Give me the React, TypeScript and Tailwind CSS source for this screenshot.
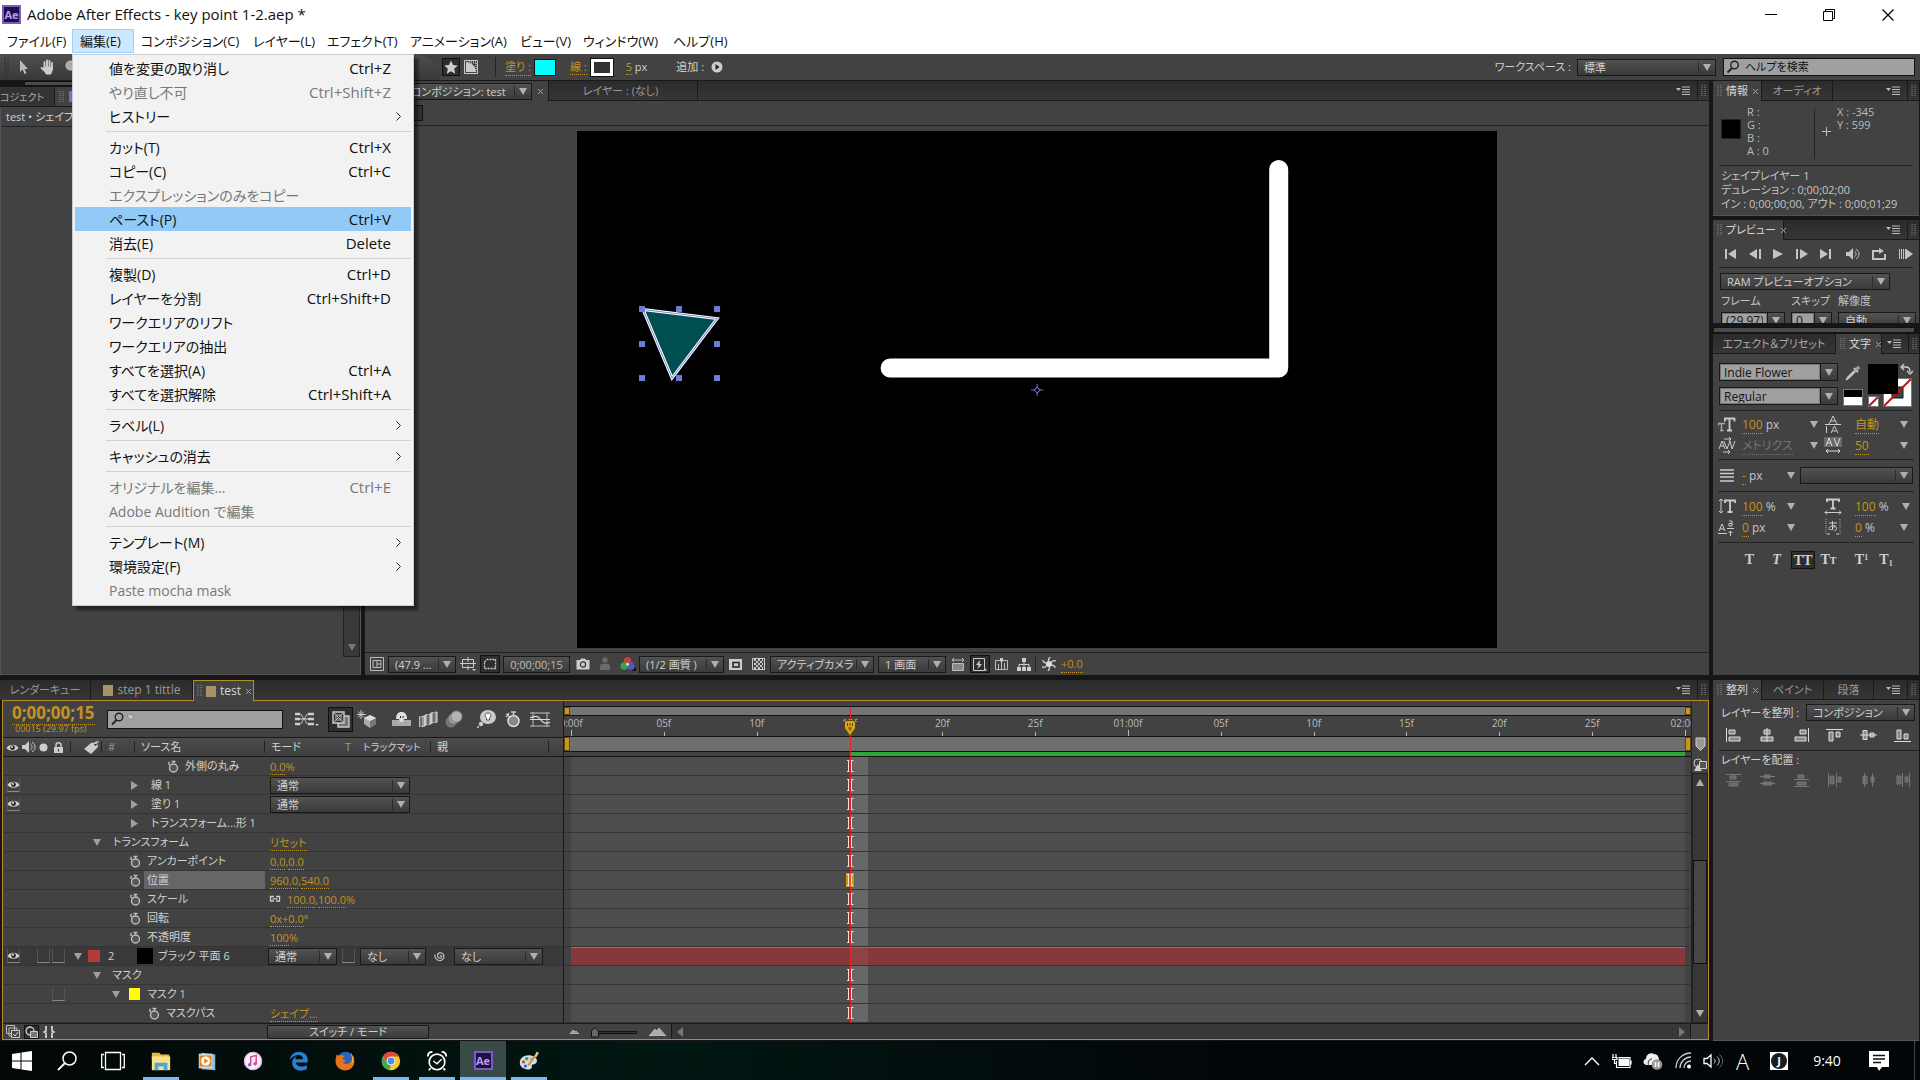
import React from "react";
import { clsx } from "clsx";

type Entry = { label: string; keys?: string; sub?: boolean; off?: boolean; active?: boolean };

const editMenu: Entry[][] = [
  [
    { label: "値を変更の取り消し", keys: "Ctrl+Z" },
    { label: "やり直し不可", keys: "Ctrl+Shift+Z", off: true },
    { label: "ヒストリー", sub: true },
  ],
  [
    { label: "カット(T)", keys: "Ctrl+X" },
    { label: "コピー(C)", keys: "Ctrl+C" },
    { label: "エクスプレッションのみをコピー", off: true },
    { label: "ペースト(P)", keys: "Ctrl+V", active: true },
    { label: "消去(E)", keys: "Delete" },
  ],
  [
    { label: "複製(D)", keys: "Ctrl+D" },
    { label: "レイヤーを分割", keys: "Ctrl+Shift+D" },
    { label: "ワークエリアのリフト" },
    { label: "ワークエリアの抽出" },
    { label: "すべてを選択(A)", keys: "Ctrl+A" },
    { label: "すべてを選択解除", keys: "Ctrl+Shift+A" },
  ],
  [{ label: "ラベル(L)", sub: true }],
  [{ label: "キャッシュの消去", sub: true }],
  [
    { label: "オリジナルを編集...", keys: "Ctrl+E", off: true },
    { label: "Adobe Audition で編集", off: true },
  ],
  [
    { label: "テンプレート(M)", sub: true },
    { label: "環境設定(F)", sub: true },
    { label: "Paste mocha mask", off: true },
  ],
];

const menus = [
  { label: "ファイル(F)", w: "w-[72px]" },
  { label: "編集(E)", w: "w-[62px]", open: true },
  { label: "コンポジション(C)", w: "w-[112px]" },
  { label: "レイヤー(L)", w: "w-[74px]" },
  { label: "エフェクト(T)", w: "w-[83px]" },
  { label: "アニメーション(A)", w: "w-[110px]" },
  { label: "ビュー(V)", w: "w-[63px]" },
  { label: "ウィンドウ(W)", w: "w-[90px]" },
  { label: "ヘルプ(H)", w: "w-[70px]" },
];

/* ---------- small shared pieces ---------- */

const Svg = ({ w = 16, h = 16, className, children }: { w?: number; h?: number; className?: string; children: React.ReactNode }) => (
  <svg width={w} height={h} viewBox={`0 0 ${w} ${h}`} fill="none" aria-hidden="true" className={clsx("shrink-0", className)}>
    {children}
  </svg>
);

const Down = ({ className = "text-[#b0b0b0]" }: { className?: string }) => (
  <Svg w={8} h={7} className={className}>
    <path d="M0 0h8L4 7z" fill="currentColor" />
  </Svg>
);

const Right = () => (
  <Svg w={7} h={9}>
    <path d="M0 0v9l7-4.500z" fill="#a0a0a0" />
  </Svg>
);

const Cell = ({ className, children }: { className?: string; children?: React.ReactNode }) => (
  <span className={clsx("flex shrink-0 items-center justify-center", className)}>{children}</span>
);

const Grip = () => (
  <Svg w={5} h={12}>
    <path d="M1 0v12M4 0v12" stroke="#8a8a8a" strokeDasharray="1 1" />
  </Svg>
);

const Close = () => (
  <Svg w={7} h={7}>
    <path d="M1 1l5 5M6 1L1 6" stroke="#a0a0a0" />
  </Svg>
);

const PanelEnd = () => (
  <div className="ml-auto flex shrink-0 self-stretch">
    <button aria-label="パネルメニュー" className="flex w-[26px] items-center justify-center pr-[2px]">
      <Svg w={14} h={10}>
        <path d="M0 2h5L2.500 5z" fill="#bbb" />
        <path d="M6 1h8M6 3.500h8M6 6h8M6 8.500h8" stroke="#bbb" />
      </Svg>
    </button>
    <Cell className="w-[12px] border-l border-[#181818]">
      <Grip />
    </Cell>
  </div>
);

const strip =
  "flex h-[20px] shrink-0 items-stretch border-b border-[#1a1a1a] bg-linear-to-b from-[#2b2b2b] to-[#363636] whitespace-nowrap";
const activeTab =
  "-mb-px flex shrink-0 items-center gap-[4px] border-r border-[#1a1a1a] bg-[#424242] pl-1 text-[#d8d8d8]";
const idleTab = "flex shrink-0 items-center justify-center border-r border-[#1a1a1a] text-[#999]";

const Pick = ({ value, name, className }: { value: string; name: string; className?: string }) => (
  <span
    className={clsx(
      "relative flex h-[17px] shrink-0 items-center border border-[#191919] bg-linear-to-b from-[#525252] to-[#3a3a3a]",
      className
    )}>
    <select
      aria-label={name}
      className="h-full w-full appearance-none bg-transparent pr-[18px] pl-[6px] text-[11px] leading-[15px] text-[#d0d0d0] outline-none">
      <option>{value}</option>
    </select>
    <span className="pointer-events-none absolute top-[2px] right-0 bottom-[2px] flex w-[17px] items-center justify-center border-l border-[#2a2a2a]">
      <Down />
    </span>
  </span>
);

const Combo = ({ value, name, className, tall }: { value: string; name: string; className?: string; tall?: boolean }) => (
  <span className={clsx("flex shrink-0 border border-[#191919]", tall ? "h-[18px]" : "h-[17px]", className)}>
    <input
      aria-label={name}
      defaultValue={value}
      className="w-0 min-w-0 flex-1 border border-[#777] bg-[#a0a0a0] px-[3px] text-[12px] leading-[15px] text-[#141414] outline-none"
    />
    <span className="flex w-[17px] items-center justify-center border-l border-[#191919] bg-linear-to-b from-[#525252] to-[#3a3a3a]">
      <Down />
    </span>
  </span>
);

const Num = ({ children, dim }: { children: React.ReactNode; dim?: boolean }) => (
  <a
    href="#"
    className={clsx(
      "border-b border-dotted",
      dim ? "border-[#6d6d6d] text-[#737373]" : "border-[#c4921f] text-[#c4921f]"
    )}>
    {children}
  </a>
);

const Stopwatch = () => (
  <Svg w={12} h={13}>
    <circle cx="6.500" cy="8" r="4" stroke="#bdbdbd" strokeWidth="1.400" fill="#555" />
    <path d="M4.500 1.500h4M6.500 1.500v2M1 3.500l2 1.500M1.500 2l1.500 1" stroke="#bdbdbd" strokeWidth="1.300" />
  </Svg>
);

const Eye = () => (
  <Svg w={13} h={9}>
    <path d="M.5 5C3 .8 10 .8 12.500 5 10 8.600 3 8.600.5 5z" fill="#d0d0d0" />
    <circle cx="6.500" cy="4.600" r="2.400" fill="#222" />
    <circle cx="6" cy="4" r=".9" fill="#fff" />
  </Svg>
);

const Switch = ({ children }: { children?: React.ReactNode }) => (
  <span className="flex h-[14px] w-[13px] shrink-0 items-center justify-center border-x border-b border-x-[#565656] border-b-[#8a8a8a]">
    {children}
  </span>
);

const AeLogo = () => (
  <span className="flex h-[19px] w-[19px] items-center justify-center border-2 border-[#7b5bc4] bg-[#1f0f45] text-[11px] leading-none font-bold text-[#b79cf0]">
    Ae
  </span>
);

/* ---------- window header ---------- */

const EditMenu = () => (
  <div
    role="menu"
    className="absolute top-full left-0 z-50 w-[342px] border border-[#ccc] bg-[#f2f2f2] px-[2px] pt-px pb-[3px] shadow-[4px_4px_3px_rgba(0,0,0,0.5)]">
    {editMenu.map((group, g) => (
      <div key={g}>
        {g > 0 && <div className="my-[3px] ml-[31px] h-px bg-[#d2d2d2]" />}
        {group.map((item) => (
          <button
            key={item.label}
            role="menuitem"
            disabled={item.off}
            className={clsx(
              "flex h-[24px] w-full items-center justify-between pr-[9px] pl-[34px] text-[14px] leading-[23px] whitespace-nowrap",
              item.active && "bg-[#91c9f7]",
              item.off ? "text-[#787878]" : "text-[#111]"
            )}>
            <span>{item.label}</span>
            {item.keys && <span className="pr-[11px] text-[15px]">{item.keys}</span>}
            {item.sub && (
              <Svg w={7} h={9}>
                <path d="M1.500.5l4 4-4 4" stroke="#222" />
              </Svg>
            )}
          </button>
        ))}
      </div>
    ))}
  </div>
);

const Header = () => (
  <header className="bg-white text-[#111]">
    <div className="flex h-[29px] items-center pl-[2px]">
      <AeLogo />
      <h1 className="pb-[2px] pl-[6px] text-[15px] leading-[20px]">Adobe After Effects - key point 1-2.aep *</h1>
      <div className="mr-[2px] ml-auto flex self-stretch">
        <button aria-label="最小化" className="flex w-[58px] items-center justify-center">
          <Svg w={12} h={12}>
            <path d="M0 5.500h12" stroke="#000" />
          </Svg>
        </button>
        <button aria-label="元に戻す" className="flex w-[58px] items-center justify-center">
          <Svg w={12} h={12}>
            <path d="M.5 2.500h9v9h-9zM2.500 2.500v-2h9v9h-2" stroke="#000" />
          </Svg>
        </button>
        <button aria-label="閉じる" className="flex w-[60px] items-center justify-center">
          <Svg w={12} h={12}>
            <path d="M.5.5l11 11M11.500.5l-11 11" stroke="#000" strokeWidth="1.200" />
          </Svg>
        </button>
      </div>
    </div>
    <nav className="flex h-[25px] text-[13px] leading-[22px] whitespace-nowrap">
      {menus.map((m) => (
        <div key={m.label} className={clsx("relative shrink-0", m.w)}>
          <button
            className={clsx(
              "h-[24px] w-full pl-[7px] text-left",
              m.open && "border border-[#99d1ff] bg-[#cce8ff]"
            )}>
            {m.label}
          </button>
          {m.open && <EditMenu />}
        </div>
      ))}
    </nav>
  </header>
);

const Toolbar = () => (
  <div className="flex h-[27px] items-center border-b border-[#191919] bg-[#424242] text-[11px] leading-[16px] whitespace-nowrap text-[#d0d0d0]">
    <div className="flex w-[440px] shrink-0 items-center self-stretch rounded-tr-[32px] bg-linear-to-b from-[#505050] to-[#383838]">
      <Cell className="w-[12px]">
        <Svg w={5} h={20}>
          <path d="M1 0v20M4 0v20" stroke="#222" strokeDasharray="1 1" />
        </Svg>
      </Cell>
      <Cell className="w-[24px]">
        <Svg w={10} h={14}>
          <path d="M1 0v12l2.500-2.500L5.500 14l2-1-2-4H9z" fill="#bbb" />
        </Svg>
      </Cell>
      <Cell className="w-[24px]">
        <Svg w={16} h={16}>
          <path
            d="M4.500 8.500V3.200M7 7.500V1.500M9.500 7.500V2M12 8.500V4"
            stroke="#ccc"
            strokeWidth="1.900"
            strokeLinecap="round"
          />
          <path d="M3.500 7.500h9.500v3l-2 5H6L4.500 13 .8 9.500c-.8-1 .6-2 1.500-1.200l1.200 1z" fill="#ccc" />
        </Svg>
      </Cell>
      <Cell className="w-[24px]">
        <Svg w={14} h={14}>
          <circle cx="5.500" cy="5.500" r="4.500" fill="#aaa" stroke="#ccc" />
          <path d="M9 9l4 4" stroke="#ccc" strokeWidth="2" />
        </Svg>
      </Cell>
    </div>
    <button aria-label="シェイプを作成" className="ml-[2px] flex h-[18px] w-[18px] shrink-0 items-center justify-center border border-[#111] bg-[#2e2e2e]">
      <Svg w={14} h={14}>
        <path d="M7 .5l2 4.600 4.800.5-3.600 3.200 1 4.900L7 11.200l-4.200 2.500 1-4.900L.2 5.600 5 5.100z" fill="#ccc" />
      </Svg>
    </button>
    <button aria-label="マスクを作成" className="ml-[4px]">
      <Svg w={14} h={14}>
        <path d="M.5.5h13v13H.5z" stroke="#ccc" />
        <path d="M2 2v10h10C12 7 8 2.500 2 2z" fill="#ccc" />
        <path d="M5 2.500h7.500v8" stroke="#aaa" strokeWidth="2.500" strokeDasharray="1 1" />
      </Svg>
    </button>
    <span className="mr-[9px] ml-[17px] h-[20px] border-l border-[#222]" />
    <Num>塗り :</Num>
    <button aria-label="塗りのカラー" className="ml-[3px] h-[17px] w-[22px] shrink-0 border border-[#111] bg-[#00ffff]" />
    <span className="ml-[14px] shrink-0">
      <Num>線 :</Num>
    </span>
    <button aria-label="線のカラー" className="ml-[4px] h-[17px] w-[22px] shrink-0 border-3 border-white bg-[#333] outline outline-[#111]" />
    <span className="ml-[13px] shrink-0">
      <Num>5</Num> px
    </span>
    <span className="ml-[29px] shrink-0">追加 :</span>
    <button aria-label="追加" className="ml-[7px]">
      <Svg w={12} h={12}>
        <circle cx="6" cy="6" r="5.500" fill="#ccc" />
        <path d="M4.500 3v6l4-3z" fill="#222" />
      </Svg>
    </button>
    <span className="mr-[6px] ml-auto shrink-0">ワークスペース :</span>
    <Pick name="ワークスペース" value="標準" className="w-[139px]" />
    <label className="mr-[5px] ml-[7px] flex h-[18px] w-[192px] shrink-0 items-center border border-[#111] bg-[#a0a0a0]">
      <Svg w={14} h={14} className="ml-[2px]">
        <circle cx="8.500" cy="5" r="3.800" stroke="#222" strokeWidth="1.400" />
        <path d="M6 8l-4.500 4.500" stroke="#222" strokeWidth="1.800" />
      </Svg>
      <input
        aria-label="ヘルプを検索"
        defaultValue="ヘルプを検索"
        className="w-0 min-w-0 flex-1 bg-transparent pl-[5px] text-[11px] leading-[16px] text-[#111] outline-none"
      />
    </label>
  </div>
);

/* ---------- upper panels ---------- */

const ProjectPanel = () => (
  <section className="flex w-[361px] shrink-0 flex-col text-[11px] leading-[16px] whitespace-nowrap text-[#d0d0d0]">
    <div className="ml-[24px] h-[5px] border border-[#111] bg-[#4a4a4a]" />
    <div className="mt-px flex h-[20px] shrink-0 items-stretch border-b border-[#1a1a1a] bg-[#333]">
      <button className="w-[55px] shrink-0 border-r border-[#1a1a1a] text-left text-[10px] text-[#aaa]">コジェクト</button>
      <button aria-label="エフェクトコントロール" className="flex w-[120px] items-center gap-[5px] bg-[#424242] pl-[4px]">
        <Grip />
        <span className="h-[11px] w-[11px] bg-[#6b74c9]" />
      </button>
    </div>
    <div className="flex flex-1 flex-col border-x border-b border-[#555] bg-[#424242]">
      <p className="h-[20px] border-b border-[#222] pt-px pl-[5px] leading-[18px]">test • シェイプ</p>
      <div className="flex flex-1 justify-end pb-[17px]">
        <div className="flex w-[17px] items-end justify-center border border-[#222] bg-[#393939] pb-[5px]">
          <Down className="text-[#777]" />
        </div>
      </div>
    </div>
  </section>
);

const handles = [
  [643, 309],
  [680, 309],
  [718, 309],
  [643, 344],
  [718, 344],
  [643, 378],
  [680, 378],
  [718, 378],
];

const Artwork = () => (
  <svg viewBox="578 131 919 517" className="block w-[68.4%] bg-black" role="img" aria-label="test">
    <path d="M644 309.500L718 318.500 673 378z" fill="#004f50" stroke="#fff" strokeWidth="3" />
    <path d="M644 309.500L718 318.500 673 378z" stroke="#7d88dc" fill="none" />
    {handles.map(([x, y]) => (
      <rect key={`${x}-${y}`} x={x - 3} y={y - 3} width="6" height="6" fill="#6f7bd6" />
    ))}
    <path d="M891 368H1279.500V169.500" stroke="#fff" strokeWidth="19" fill="none" strokeLinecap="round" strokeLinejoin="round" />
    <path d="M1038 384v4M1038 392v4M1032 390h4M1040 390h4M1038 387l3 3-3 3-3-3z" stroke="#6f74c8" fill="none" />
  </svg>
);

const ViewerFooter = () => (
  <div className="flex h-[23px] items-center border-t border-[#222] text-[11px] leading-[16px] text-[#bbb]">
    <Cell className="w-[23px]">
      <Svg w={14} h={14}>
        <path d="M.5.5h13v13H.5z" stroke="#bbb" />
        <path d="M3 3.500h8v7H3zM7 3.500v7M7 7h4" stroke="#bbb" />
      </Svg>
    </Cell>
    <Pick name="拡大率" value="(47.9 ..." className="w-[68px]" />
    <Cell className="w-[24px]">
      <Svg w={16} h={14}>
        <path d="M2.500 2.500h11v8h-11zM0 6.500h6M10 6.500h6M8 0v5M8 8.500V13M6 6.500h4" stroke="#ccc" />
        <path d="M12 12h4l-2 2z" fill="#ccc" />
      </Svg>
    </Cell>
    <Cell className="h-[18px] w-[20px] border border-[#111] bg-[#2e2e2e]">
      <Svg w={14} h={12}>
        <path d="M1.500 4l2.500-2.500h8.500v9h-11z" stroke="#ccc" strokeWidth="1.300" strokeDasharray="2 1" />
      </Svg>
    </Cell>
    <button className="mx-[3px] h-[17px] w-[67px] shrink-0 border border-[#191919] bg-linear-to-b from-[#525252] to-[#3a3a3a] leading-[15px]">
      0;00;00;15
    </button>
    <Cell className="w-[20px]">
      <Svg w={14} h={12}>
        <path d="M1 2h3l1-1.500h4L10 2h3.500v9.500H.5V2z" fill="#ccc" />
        <circle cx="7" cy="6.500" r="2.600" fill="#ccc" stroke="#333" strokeWidth="1.200" />
      </Svg>
    </Cell>
    <Cell className="w-[24px]">
      <Svg w={10} h={14}>
        <circle cx="5" cy="3" r="2.800" fill="#6a6a6a" />
        <path d="M0 13V8.500C0 6 10 6 10 8.500V13z" fill="#6a6a6a" />
      </Svg>
    </Cell>
    <Cell className="w-[22px]">
      <Svg w={16} h={14}>
        <circle cx="7.500" cy="4" r="3.800" fill="#c74538" />
        <circle cx="4.200" cy="9" r="3.800" fill="#3ba046" />
        <circle cx="10.500" cy="9" r="3.800" fill="#5757c4" />
        <circle cx="7.500" cy="7.300" r="1.500" fill="#ddd" />
        <path d="M12 14h4v-4z" fill="#111" />
      </Svg>
    </Cell>
    <Pick name="解像度" value="(1/2 画質 )" className="w-[85px]" />
    <Cell className="w-[23px]">
      <Svg w={13} h={11}>
        <path d="M0 0h13v11H0z" fill="#ccc" />
        <path d="M4 3.500h6v4.500H4z" fill="#ccc" stroke="#222" strokeWidth="1.500" />
      </Svg>
    </Cell>
    <Cell className="w-[23px]">
      <Svg w={13} h={12}>
        <path d="M.5.5h12v11H.5z" stroke="#ccc" />
        <path d="M2 2h9M2 6h9M2 10h9" stroke="#ccc" strokeWidth="2" strokeDasharray="2 2" />
        <path d="M4 4h8M4 8h8" stroke="#ccc" strokeWidth="2" strokeDasharray="2 2" />
      </Svg>
    </Cell>
    <Pick name="3D ビュー" value="アクティブカメラ" className="mr-[4px] w-[104px]" />
    <Pick name="ビューレイアウト" value="1 画面" className="w-[68px]" />
    <Cell className="w-[24px]">
      <Svg w={12} h={13}>
        <path d="M0 2h12M2 0L0 2l2 2M10 0l2 2-2 2" stroke="#bbb" />
        <path d="M.5 5.500h11v7H.5z" fill="#888" stroke="#bbb" />
      </Svg>
    </Cell>
    <Cell className="h-[18px] w-[20px] border border-[#111] bg-[#2e2e2e]">
      <Svg w={14} h={13}>
        <path d="M.5.5h11v12H.5z" stroke="#ccc" />
        <path d="M7 2L3 7h2.500L4.500 11 9 6H6.500z" fill="#ccc" />
        <path d="M11 11h3l-1.500 2z" fill="#ccc" />
      </Svg>
    </Cell>
    <Cell className="w-[22px]">
      <Svg w={13} h={12}>
        <path d="M.5 2.500h12v9H.5zM3.500 11V6M6.500 11V4M9.500 11V5" stroke="#bbb" />
        <path d="M5 0h3v3L6.500 4.500 5 3z" fill="#ccc" />
      </Svg>
    </Cell>
    <Cell className="w-[23px]">
      <Svg w={14} h={13}>
        <path d="M5 0h4v4H5zM0 9h4v4H0zM5 9h4v4H5zM10 9h4v4h-4z" fill="#ccc" />
        <path d="M7 4v5M2 9V6.500h10V9" stroke="#ccc" />
      </Svg>
    </Cell>
    <Cell className="w-[26px] border-l border-[#222]">
      <Svg w={14} h={14}>
        <circle cx="7" cy="7" r="3" fill="#ddd" />
        <path d="M7 5c-1-2 0-4 1-5M9 6c1-2 3-3 5-2M9 8c2 0 4 1 4 3M7 9c1 2 0 4-1 5M5 8c-1 2-3 3-5 2M5 6C3 6 1 5 1 3" stroke="#ccc" strokeWidth="1.400" />
      </Svg>
    </Cell>
    <Num>+0.0</Num>
  </div>
);

const CompPanel = () => (
  <section className="flex min-w-0 flex-1 flex-col bg-[#424242] text-[11px] leading-[16px]">
    <div className={strip}>
      <div className="-mb-px flex items-center border-r border-[#1a1a1a] bg-[#424242] pr-[4px]">
        <Pick name="コンポジション" value="コンポジション: test" className="mr-[5px] ml-[39px] w-[128px]" />
        <Close />
      </div>
      <button className={clsx(idleTab, "w-[149px] pr-[5px]")}>レイヤー : (なし)</button>
      <PanelEnd />
    </div>
    <div className="h-[25px] border-b border-[#222] py-[4px]">
      <div className="h-[16px] w-[58px] border border-[#111] bg-[#333]" />
    </div>
    <div className="flex flex-1 items-center justify-center pt-[5px] pb-[4px]">
      <Artwork />
    </div>
    <ViewerFooter />
  </section>
);

const InfoPanel = () => (
  <section className="border-b border-[#555] bg-[#424242] pb-[4px]">
    <div className={strip}>
      <button className={clsx(activeTab, "w-[49px]")}>
        <Grip />
        情報
        <Close />
      </button>
      <button className={clsx(idleTab, "w-[71px]")}>オーディオ</button>
      <PanelEnd />
    </div>
    <div className="mx-[6px] flex h-[65px] border-b border-[#222] pt-[4px] leading-[13px] text-[#bbb]">
      <span className="mt-[14px] ml-[2px] h-[20px] w-[20px] border border-[#222] bg-black" />
      <div className="ml-[6px] w-[67px]">
        <p>R :</p>
        <p>G :</p>
        <p>B :</p>
        <p>A : 0</p>
      </div>
      <div className="mt-[4px] mr-[7px] h-[50px] border-l border-[#222]" />
      <Svg w={9} h={9} className="mt-[22px]">
        <path d="M4.500 0v9M0 4.500h9" stroke="#bbb" />
      </Svg>
      <div className="ml-[6px]">
        <p>X : -345</p>
        <p>Y : 599</p>
      </div>
    </div>
    <div className="pt-[3px] pl-[8px] text-[11px] leading-[14px] whitespace-nowrap text-[#c4c4c4]">
      <p>シェイプレイヤー 1</p>
      <p>デュレーション : 0;00;02;00</p>
      <p>イン : 0;00;00;00, アウト : 0;00;01;29</p>
    </div>
  </section>
);

const PreviewPanel = () => (
  <section className="mt-[4px] h-[103px] overflow-hidden bg-[#424242]">
    <div className={strip}>
      <button className={clsx(activeTab, "w-[71px]")}>
        <Grip />
        プレビュー
        <Close />
      </button>
      <PanelEnd />
    </div>
    <div className="mx-[6px] flex h-[28px] items-center justify-between border-b border-[#222] pl-[6px] text-[#c4c4c4]">
      <button aria-label="最初のフレーム">
        <Svg w={11} h={10}>
          <path d="M1 0v10" stroke="currentColor" strokeWidth="2" />
          <path d="M11 0v10L3 5z" fill="currentColor" />
        </Svg>
      </button>
      <button aria-label="前のフレーム">
        <Svg w={12} h={10}>
          <path d="M8 0v10L0 5z" fill="currentColor" />
          <path d="M11 0v10" stroke="currentColor" strokeWidth="2" />
        </Svg>
      </button>
      <button aria-label="再生">
        <Svg w={10} h={10}>
          <path d="M0 0v10l10-5z" fill="currentColor" />
        </Svg>
      </button>
      <button aria-label="次のフレーム">
        <Svg w={12} h={10}>
          <path d="M1 0v10" stroke="currentColor" strokeWidth="2" />
          <path d="M4 0v10l8-5z" fill="currentColor" />
        </Svg>
      </button>
      <button aria-label="最後のフレーム">
        <Svg w={11} h={10}>
          <path d="M0 0v10l8-5z" fill="currentColor" />
          <path d="M10 0v10" stroke="currentColor" strokeWidth="2" />
        </Svg>
      </button>
      <button aria-label="オーディオ" className="ml-[2px]">
        <Svg w={14} h={12}>
          <path d="M0 4h3l4-4v12L3 8H0z" fill="currentColor" />
          <path d="M8.500 3c2 1.500 2 4.500 0 6M10 1c4 2.500 4 7.500 0 10" stroke="currentColor" />
        </Svg>
      </button>
      <button aria-label="ループ">
        <Svg w={14} h={12}>
          <path d="M8 3H1v8h12V6" stroke="currentColor" strokeWidth="2" />
          <path d="M7 0v6l5-3z" fill="currentColor" />
        </Svg>
      </button>
      <button aria-label="RAM プレビュー">
        <Svg w={14} h={10}>
          <path d="M.5 0v10M2.500 0v10M4.500 0v10M6.500 0v10" stroke="currentColor" />
          <path d="M7 0v10l7-5z" fill="currentColor" />
        </Svg>
      </button>
    </div>
    <Pick name="プレビューオプション" value="RAM プレビューオプション" className="mt-[5px] ml-[7px] w-[170px]" />
    <div className="mt-[3px] flex gap-[6px] pl-[8px] whitespace-nowrap text-[#c4c4c4]">
      <div className="w-[64px]">
        フレーム
        <Combo name="フレームレート" value="(29.97)" className="mt-[3px]" />
      </div>
      <div className="w-[41px]">
        スキップ
        <Combo name="スキップ" value="0" className="mt-[3px]" />
      </div>
      <div className="w-[78px]">
        解像度
        <Pick name="プレビュー解像度" value="自動" className="mt-[3px]" />
      </div>
    </div>
  </section>
);

const TypeIcon = ({ kind }: { kind: string }) => (
  <Svg w={18} h={17}>
    {kind === "size" && (
      <>
        <path d="M6 2.500h11M7 2v3.500M16.500 2v3.500M11.500 2v12M9 14.500h5" stroke="#ccc" strokeWidth="1.800" />
        <path d="M0 7.500h7M.5 7v2.500M3.500 7v7M2 14.500h3.500" stroke="#aaa" strokeWidth="1.400" />
      </>
    )}
    {kind === "leading" && (
      <path d="M5 8L9 0l4 8M6.500 5h5M1 8.500h16M2.500 10v7M7 17l3.500-7 3.500 7M8.500 15h4" stroke="#ccc" />
    )}
    {kind === "kern" && (
      <path d="M1 12l3-8 3 8M2 9h4M6 4l3 8 3-8M12 4l2 8 3-8M6 2h7M11 0l2 2-2 2M5 15h7M10 13l2 2-2 2" stroke="#ccc" />
    )}
    {kind === "track" && (
      <>
        <path d="M0 0h18v10H0z" fill="#6a6a6a" />
        <path d="M2 9l3-8 3 8M3 6h4M10 1l3 8 3-8M2 14h14M4 12l-2 2 2 2M14 12l2 2-2 2" stroke="#ddd" />
      </>
    )}
    {kind === "vscale" && (
      <>
        <path d="M3 1v14M1 3l2-2 2 2M1 13l2 2 2-2" stroke="#ccc" />
        <path d="M7 5V2.500h10V5M12 2v12M9.500 14h5" stroke="#ccc" strokeWidth="1.800" />
      </>
    )}
    {kind === "hscale" && (
      <>
        <path d="M3 4V1.500h12V4M9 1v9M6.500 10.500h5" stroke="#ccc" strokeWidth="1.800" />
        <path d="M1 14.500h16M3 12.500l-2 2 2 2M15 12.500l2 2-2 2" stroke="#ccc" />
      </>
    )}
    {kind === "baseline" && (
      <path d="M1 12l3-7 3 7M2 10h4M0 14.500h9M11 2h3v5h-3V4.500h3M9 9.500h7M12.500 17v-5M10.500 14l2-2 2 2" stroke="#ccc" />
    )}
    {kind === "tsume" && (
      <>
        <path d="M2 0v16M16 0v16" stroke="#aaa" strokeDasharray="1 1" />
        <path d="M5 4h8M8.500 2v9M11 6c-1 4-5 6-6 4s5-5 7-2-2 4-2 4M3 15h3M12 15h3" stroke="#ccc" />
      </>
    )}
  </Svg>
);

type FieldProps = { icon: string; value: string; unit?: string; dim?: boolean; className: string };

const Field = ({ icon, value, unit, dim, className }: FieldProps) => (
  <div className={clsx("flex h-[21px] items-center text-[12px]", className)}>
    <TypeIcon kind={icon} />
    <span className="flex-1 leading-[14px] whitespace-nowrap text-[#c4c4c4]">
      <Num dim={dim}>{value}</Num> {unit}
    </span>
    <Down />
  </div>
);

const CharacterPanel = () => (
  <section className="mt-px flex-1 bg-[#424242]">
    <div className={strip}>
      <button className={clsx(idleTab, "w-[123px] text-[#aaa]")}>エフェクト＆プリセット</button>
      <button className={clsx(activeTab, "w-[46px]")}>
        <Grip />
        文字
        <Close />
      </button>
      <PanelEnd />
    </div>
    <div className="mx-[6px] flex h-[57px] border-b border-[#222] pt-[9px]">
      <div className="flex w-[121px] flex-col gap-[6px]">
        <Combo tall name="フォント" value="Indie Flower" />
        <Combo tall name="フォントスタイル" value="Regular" />
      </div>
      <div className="flex w-[30px] flex-col items-center gap-[8px] pt-[2px]">
        <Svg w={16} h={16}>
          <path d="M9 3l4 4" stroke="#ccc" strokeWidth="2" />
          <path d="M10 4l3-3.500L15.500 3 12 6z" fill="#999" />
          <path d="M9.500 5.500L3 12l-2 3 3-2 6.500-6.500" stroke="#ccc" strokeWidth="1.300" />
        </Svg>
        <span className="h-[17px] w-[20px] border border-[#777] bg-linear-to-b from-black from-45% to-white to-45%" />
      </div>
      <Svg w={45} h={45}>
        <path d="M15.500 15.500h28v28h-28z" fill="#fff" stroke="#777" />
        <path d="M24 24h11v11H24z" fill="#424242" stroke="#111" />
        <path d="M16 43L43 16" stroke="#a81d1d" strokeWidth="2" />
        <path d="M0 1h30v30H0z" fill="#000" />
        <path d="M.5 33.500h10v10H.5z" fill="#fff" stroke="#777" />
        <path d="M1 43l9-9" stroke="#b0162b" strokeWidth="2" />
        <path d="M34 4h4c3 0 4 2 4 5M36 1l-3 3 3 3M39 8l3 3 3-3" stroke="#ccc" strokeWidth="1.400" />
      </Svg>
    </div>
    <div className="mx-[5px] border-b border-[#222] py-[3px]">
      <div className="flex gap-[6px]">
        <Field className="w-[100px] gap-[6px]" icon="size" value="100" unit="px" />
        <Field className="w-[84px] gap-[13px]" icon="leading" value="自動" />
      </div>
      <div className="flex gap-[6px]">
        <Field className="w-[100px] gap-[6px]" icon="kern" value="メトリクス" dim />
        <Field className="w-[84px] gap-[13px]" icon="track" value="50" />
      </div>
    </div>
    <div className="mx-[5px] flex h-[32px] items-center border-b border-[#222] text-[12px] text-[#c4c4c4]">
      <Svg w={18} h={13}>
        <path d="M2 1h14M2 4.500h14M2 8h14M2 12h14" stroke="#ccc" strokeWidth="1.600" />
      </Svg>
      <span className="w-[51px] pl-[6px] leading-[14px]">
        <Num>-</Num> px
      </span>
      <Down />
      <Pick name="線の種類" value="" className="ml-[5px] w-[113px]" />
    </div>
    <div className="mx-[5px] border-b border-[#222] py-[4px]">
      <div className="flex gap-[29px]">
        <Field className="w-[77px] gap-[6px]" icon="vscale" value="100" unit="%" />
        <Field className="w-[84px] gap-[13px]" icon="hscale" value="100" unit="%" />
      </div>
      <div className="flex gap-[29px]">
        <Field className="w-[77px] gap-[6px]" icon="baseline" value="0" unit="px" />
        <Field className="w-[84px] gap-[13px]" icon="tsume" value="0" unit="%" />
      </div>
    </div>
    <div className="flex h-[34px] items-center pl-[24px] text-[14px] font-bold text-[#d0d0d0] [font-family:Liberation_Serif,serif]">
      <button className="w-[25px]">T</button>
      <button className="w-[29px] italic">T</button>
      <button className="h-[18px] w-[24px] border border-[#111] bg-[#2e2e2e] leading-[15px]">TT</button>
      <button className="w-[27px]">
        T<span className="text-[10px]">T</span>
      </button>
      <button className="w-[33px] pl-[6px]">
        T<sup className="text-[8px]">1</sup>
      </button>
      <button className="w-[22px]">
        T<sub className="text-[8px]">1</sub>
      </button>
    </div>
  </section>
);

/* ---------- timeline ---------- */

type Row = {
  label: string;
  pad: string;
  mark?: "open" | "closed" | "watch";
  gap?: string;
  eye?: boolean;
  value?: string[];
  unit?: string;
  mode?: boolean;
  link?: boolean;
  selected?: boolean;
  layer?: boolean;
  mask?: boolean;
};

const rows: Row[] = [
  { label: "外側の丸み", pad: "pl-[98px]", mark: "watch", value: ["0.0"], unit: "%" },
  { label: "線 1", pad: "pl-[62px]", mark: "closed", gap: "gap-[13px]", eye: true, mode: true },
  { label: "塗り 1", pad: "pl-[62px]", mark: "closed", gap: "gap-[13px]", eye: true, mode: true },
  { label: "トランスフォーム...形 1", pad: "pl-[62px]", mark: "closed", gap: "gap-[13px]" },
  { label: "トランスフォーム", pad: "pl-[24px]", mark: "open", gap: "gap-[12px]", value: ["リセット"] },
  { label: "アンカーポイント", pad: "pl-[60px]", mark: "watch", value: ["0.0", "0.0"] },
  { label: "位置", pad: "pl-[60px]", mark: "watch", value: ["960.0", "540.0"], selected: true },
  { label: "スケール", pad: "pl-[60px]", mark: "watch", value: ["100.0", "100.0"], unit: "%", link: true },
  { label: "回転", pad: "pl-[60px]", mark: "watch", value: ["0x+0.0"], unit: "°" },
  { label: "不透明度", pad: "pl-[60px]", mark: "watch", value: ["100"], unit: "%" },
  { label: "ブラック 平面 6", pad: "pl-[5px]", mark: "open", layer: true, eye: true },
  { label: "マスク", pad: "pl-[24px]", mark: "open", gap: "gap-[11px]" },
  { label: "マスク 1", pad: "pl-[43px]", mark: "open", mask: true },
  { label: "マスクパス", pad: "pl-[79px]", mark: "watch", value: ["シェイプ..."] },
];

const LayerRow = ({ row }: { row: Row }) => (
  <div
    className={clsx(
      "flex h-[19px] items-center border-b border-[#343434] whitespace-nowrap text-[#d0d0d0]",
      row.layer && "bg-[#393939]"
    )}>
    <div className="flex w-[66px] shrink-0 items-center gap-[2px] pl-[4px]">
      {row.eye && (
        <Switch>
          <Eye />
        </Switch>
      )}
      {row.layer && (
        <div className="ml-[15px] flex gap-[2px]">
          <Switch />
          <Switch />
        </div>
      )}
      {row.mask && (
        <div className="ml-[45px]">
          <Switch />
        </div>
      )}
    </div>
    <div className={clsx("flex w-[196px] shrink-0 items-center self-stretch", row.pad, row.gap ?? "gap-[3px]")}>
      {row.mark === "open" && <Down className="text-[#a0a0a0]" />}
      {row.mark === "closed" && <Right />}
      {row.mark === "watch" && <Stopwatch />}
      {row.layer && (
        <>
          <span className="ml-[3px] h-[12px] w-[12px] bg-[#b73a3a]" />
          <span className="w-[31px] pl-[5px]">2</span>
          <span className="mr-[2px] h-[16px] w-[16px] bg-black" />
        </>
      )}
      {row.mask && <span className="mr-[4px] ml-[6px] h-[12px] w-[11px] bg-[#ffff00]" />}
      <span className={clsx(row.selected && "flex-1 self-stretch bg-[#666] leading-[18px]", row.mark === "watch" && "pl-[3px]")}>
        {row.label}
      </span>
    </div>
    <div className="flex flex-1 items-center gap-[2px] pl-px">
      {row.mode && <Pick name={`${row.label} モード`} value="通常" className="ml-[4px] w-[140px]" />}
      {row.link && (
        <Svg w={14} h={9} className="mr-[3px] ml-[2px]">
          <path d="M6 1.500H2.500v4.500H6M8 1.500h3.500v4.500H8M4.500 3.800h5" stroke="#ccc" strokeWidth="1.300" />
        </Svg>
      )}
      {row.value && (
        <span className={clsx("leading-[13px] text-[#c4921f]", !row.link && "pl-[4px]")}>
          {row.value.map((v, i) => (
            <React.Fragment key={i}>
              {i > 0 && ","}
              <Num>{v}</Num>
            </React.Fragment>
          ))}
          {row.unit}
        </span>
      )}
      {row.layer && (
        <>
          <Pick name="描画モード" value="通常" className="ml-[2px] w-[69px]" />
          <span className="mx-[3px]">
            <Switch />
          </span>
          <Pick name="トラックマット" value="なし" className="w-[66px]" />
          <Cell className="w-[24px]">
            <Svg w={12} h={12}>
              <path d="M6 6c1-1 2 0 1.500 1.200C6.500 9 3.500 8 3.500 5.500 3.500 2.500 8 2 9.500 4.500c1.500 3-1 6.500-4.500 6C2 10 .5 7 1 4.500" stroke="#bbb" strokeWidth="1.200" />
            </Svg>
          </Cell>
          <Pick name="親" value="なし" className="w-[89px]" />
        </>
      )}
    </div>
  </div>
);

const Outline = () => (
  <div className="w-[560px] shrink-0 text-[11px] leading-[16px] text-[#d0d0d0]">
    <div className="flex h-[36px] items-center">
      <div className="w-[104px] shrink-0 pl-[9px] whitespace-nowrap text-[#c4921f]">
        <p className="text-[17px] leading-[18px] font-bold">
          <Num>0;00;00;15</Num>
        </p>
        <p className="pt-px pl-[3px] text-[9px] leading-[12px]">00015 (29.97 fps)</p>
      </div>
      <label className="flex h-[19px] w-[176px] shrink-0 items-center border border-[#111] bg-[#a0a0a0]">
        <Svg w={24} h={14} className="ml-[2px]">
          <circle cx="9" cy="5" r="3.800" stroke="#222" strokeWidth="1.400" />
          <path d="M6.500 8L2 12.500" stroke="#222" strokeWidth="1.800" />
          <path d="M17 3h7l-3.500 5z" fill="#ccc" stroke="#777" strokeWidth=".5" />
        </Svg>
        <input aria-label="レイヤーを検索" className="w-0 min-w-0 flex-1 bg-transparent text-[12px] outline-none" />
      </label>
      <Cell className="ml-[9px] w-[28px]">
        <Svg w={25} h={14}>
          <path d="M1 2h5M1 7h5M1 12h5M14 2h6M14 7h6M14 12h6" stroke="#ccc" strokeWidth="2.600" />
          <path d="M6 2c3 0 2 5 4 5s1-5 4-5M6 12c3 0 2-5 4-5s1 5 4 5M6 7h8" stroke="#ccc" />
          <path d="M21 12h4l-2 2z" fill="#ccc" />
        </Svg>
      </Cell>
      <Cell className="ml-[8px] h-[25px] w-[25px] border border-[#111] bg-[#2e2e2e]">
        <Svg w={18} h={17}>
          <path d="M6 5h11v11H6z" fill="#777" stroke="#ccc" strokeWidth="1.400" />
          <path d="M1 1h11v11H1z" fill="#333" stroke="#ccc" strokeWidth="1.400" />
          <path d="M1 1l11 11M12 1L1 12M4 4h5v5H4z" stroke="#bbb" />
        </Svg>
      </Cell>
      <Cell className="w-[27px]">
        <Svg w={20} h={18}>
          <path d="M4 0v9M0 4.500h9M1 1.500l6 6M7 1.500l-6 6" stroke="#ccc" />
          <path d="M13 5l6 3v6l-6 4-6-4V8z" fill="#aaa" />
          <path d="M13 11l6-3v6l-6 4z" fill="#777" />
          <path d="M13 5l6 3-6 3-6-3z" fill="#ddd" />
        </Svg>
      </Cell>
      <Cell className="ml-[5px] w-[32px]">
        <Svg w={19} h={14}>
          <path d="M0 8h19v6H0z" fill="#aaa" />
          <path d="M4 7C4 1 7 0 9.500 0S15 1 15 7h-3l-1 3H8L7 7z" fill="#ddd" />
          <path d="M8 4h1v2H8zM10.500 4h1v2h-1z" fill="#222" />
        </Svg>
      </Cell>
      <Cell className="w-[22px]">
        <Svg w={19} h={16}>
          <path d="M0 6l6-1v10l-6 1zM6 4l6-1v10l-6 1zM12 2l6-1v10l-6 1z" fill="#999" stroke="#ddd" />
          <path d="M2 5v11M9 3v11M15 1v11" stroke="#444" />
        </Svg>
      </Cell>
      <Cell className="w-[30px]">
        <Svg w={18} h={18}>
          <circle cx="6" cy="12" r="5.500" fill="#777" />
          <circle cx="8.500" cy="9" r="5.500" fill="#999" stroke="#666" />
          <circle cx="11.500" cy="6.500" r="5.500" fill="#b4b4b4" stroke="#888" />
        </Svg>
      </Cell>
      <Cell className="ml-[2px] w-[32px]">
        <Svg w={20} h={18}>
          <ellipse cx="11" cy="7" rx="8" ry="7" fill="#ccc" />
          <circle cx="4" cy="14" r="2.200" fill="#ccc" />
          <circle cx="1" cy="17" r="1" fill="#ccc" />
          <path d="M11 3c4 0 3 4 1.500 5v2h-3V8C8 7 7 3 11 3z" fill="#fff" stroke="#555" />
        </Svg>
      </Cell>
      <Cell className="w-[20px]">
        <Svg w={16} h={18}>
          <circle cx="8.500" cy="11" r="5.500" fill="#888" stroke="#ddd" strokeWidth="1.500" />
          <path d="M6 2h5M8.500 2v4M1 4l4 3M1 7l3-4" stroke="#ccc" strokeWidth="1.500" />
        </Svg>
      </Cell>
      <Cell className="w-[34px]">
        <Svg w={20} h={15}>
          <path d="M0 1h20M0 14h20M3 0v15M17 0v15" stroke="#bbb" />
          <path d="M0 5.500C5 5.500 5 3 8 5s5 9 12 5M0 7.500h20" stroke="#ddd" strokeWidth="1.200" />
        </Svg>
      </Cell>
    </div>
    <div className="flex h-[20px] items-center border-y border-[#1a1a1a] bg-linear-to-b from-[#4c4c4c] to-[#3e3e3e] whitespace-nowrap">
      <div className="flex h-[12px] w-[68px] items-center gap-[3px] border-r border-[#222] pl-[3px]">
        <Eye />
        <Svg w={14} h={12}>
          <path d="M0 4h3l4-4v12L3 8H0z" fill="#ccc" />
          <path d="M8.500 3c2 1.500 2 4.500 0 6M10 1c4 2.500 4 7.500 0 10" stroke="#ccc" />
        </Svg>
        <Svg w={9} h={9}>
          <circle cx="4.500" cy="4.500" r="4" fill="#ccc" />
        </Svg>
        <Svg w={9} h={11} className="ml-[3px]">
          <path d="M0 5h9v6H0z" fill="#ccc" />
          <path d="M2 5V3c0-3 5-3 5 0v2" stroke="#ccc" strokeWidth="1.500" />
          <path d="M4.500 7v2.500" stroke="#333" />
        </Svg>
      </div>
      <div className="flex h-[12px] w-[31px] items-center justify-end border-r border-[#222] pr-[2px]">
        <Svg w={15} h={13}>
          <path d="M0 8l7-6 6-1 1 5-7 7z" fill="#ccc" />
          <circle cx="11.500" cy="3.500" r="1.200" fill="#333" />
          <path d="M11 3c1-3 4-3 4-1" stroke="#eee" />
        </Svg>
      </div>
      <span className="flex h-[12px] w-[33px] items-center border-r border-[#222] pl-[6px] text-[#999]">#</span>
      <span className="flex h-[12px] w-[130px] items-center border-r border-[#222] pl-[6px]">ソース名</span>
      <span className="w-[80px] pl-[6px]">モード</span>
      <span className="w-[18px] text-[#999]">T</span>
      <span className="flex h-[12px] w-[68px] items-center border-r border-[#222] text-[10px]">トラックマット</span>
      <span className="flex h-[12px] w-[118px] items-center border-r border-[#222] pl-[6px]">親</span>
    </div>
    {rows.map((row) => (
      <LayerRow key={row.label} row={row} />
    ))}
  </div>
);

const ticks = ["0:00f", "05f", "10f", "15f", "20f", "25f", "01:00f", "05f", "10f", "15f", "20f", "25f", "02:00f"];

const Handle = () => <span className="w-[6px] shrink-0 border border-[#5e460b] bg-[#c9971c]" />;

const Tracks = () => (
  <div className="relative min-w-0 flex-1 overflow-hidden border-l border-[#1a1a1a]">
    <div className="mt-[5px] flex h-[10px] border-y border-[#111] bg-[#757575]">
      <Handle />
      <span className="flex-1" />
      <Handle />
    </div>
    <div className="flex h-[20px] items-stretch pl-[7px] text-[10px] leading-[14px] text-[#bbb]">
      {ticks.map((t, i) => (
        <div key={i} className={clsx("flex flex-col justify-between", i < 12 ? "min-w-0 flex-1" : "w-[6px]")}>
          <span className="self-start -translate-x-1/2 whitespace-nowrap">{t}</span>
          <span className={clsx("border-l border-[#bbb]", i % 6 === 0 ? "h-[6px]" : "h-[4px]")} />
        </div>
      ))}
    </div>
    <div className="flex h-[16px] border-y border-[#111] bg-[#6e6e6e]">
      <Handle />
      <span className="flex-1" />
      <Handle />
    </div>
    <div className="flex h-[5px] border-b border-[#111] pr-[6px] pl-[7px]">
      <span className="w-1/4" />
      <span className="flex-1 bg-[#2fa53a]" />
    </div>
    {rows.map((row) => (
      <div key={row.label} className="h-[19px] border-b border-[#343434] pr-[6px] pl-[7px]">
        <div
          className={clsx("relative h-full", row.layer ? "border-t border-[#a86466] bg-[#85393c]" : "bg-[#4d4d4d]")}>
          <span className={clsx("absolute inset-y-0 left-1/4 w-[18px]", row.layer ? "bg-white/5" : "bg-white/15")} />
          {!row.layer && (
            <Svg w={8} h={14} className={clsx("absolute top-[2px] left-1/4 z-20 -translate-x-1/2", row.selected && "bg-[#c9971c]")}>
              <path d="M1 1.500h2.500M5 1.500h2.500M1 12.500h2.500M5 12.500h2.500M2.500 1v12M5.500 1v12" stroke="#ffd9d4" />
              <path d="M4 0v14" stroke="#e02222" />
            </Svg>
          )}
        </div>
      </div>
    ))}
    {/* current time indicator */}
    <div className="pointer-events-none absolute inset-y-0 right-[6px] left-[7px]">
      <span className="absolute top-[6px] bottom-0 left-1/4 border-l border-[#e02222]" />
      <Svg w={13} h={16} className="absolute top-[19px] left-1/4 -translate-x-1/2">
        <path d="M1 2c0-2 11-2 11 0v6l-5.500 8L1 8z" fill="#d9a51e" stroke="#5e460b" />
        <path d="M4 3v3M6.500 3v3M9 3v3M4.500 8h4M6.500 8v3" stroke="#5e460b" />
      </Svg>
    </div>
  </div>
);

const Timeline = () => (
  <section className="flex min-w-0 flex-1 flex-col">
    <div className="flex h-[20px] items-stretch bg-linear-to-b from-[#2b2b2b] to-[#363636] text-[11px] leading-[16px] whitespace-nowrap">
      <button className={clsx(idleTab, "w-[91px]")}>レンダーキュー</button>
      <button className={clsx(idleTab, "w-[102px] gap-[5px] text-[12px] text-[#888]")}>
        <span className="h-[11px] w-[10px] bg-[#a8926c]" />
        step 1 tittle
      </button>
      <button className="relative z-10 -mb-px flex w-[61px] items-center gap-[4px] border-x border-t border-[#b58c2a] bg-[#424242] pl-[3px] text-[12px] text-[#d8d8d8]">
        <Grip />
        <span className="h-[11px] w-[10px] bg-[#a8926c]" />
        test
        <Close />
      </button>
      <PanelEnd />
    </div>
    <div className="ml-[2px] border border-[#b58c2a] bg-[#424242]">
      <div className="flex">
        <Outline />
        <Tracks />
        <div className="flex w-[17px] shrink-0 flex-col items-center border-l border-[#222]">
          <Svg w={11} h={14} className="mt-[36px]">
            <path d="M1 1h9v8l-4.500 4.500L1 9z" fill="#999" stroke="#ccc" />
          </Svg>
          <Svg w={14} h={13} className="mt-[7px] mb-[2px]">
            <circle cx="5" cy="5" r="4" stroke="#ccc" />
            <path d="M6.500 3.500h7v7h-7z" fill="#555" stroke="#ccc" />
            <path d="M1 13l4-7 4 7z" fill="#ccc" />
          </Svg>
          <div className="flex w-full flex-1 flex-col items-center justify-between border border-[#222] bg-[#373737] py-[5px]">
            <Down className="rotate-180 text-[#b0b0b0]" />
            <span className="mt-[28px] h-[104px] w-full border border-[#111] bg-[#464646]" />
            <Down />
          </div>
        </div>
      </div>
      <div className="flex h-[16px] items-center border-t border-[#1a1a1a] text-[11px]">
        <div className="flex w-[264px] items-center gap-[4px] pl-[3px]">
          <Svg w={14} h={13}>
            <path d="M.5.5h8v8h-8zM3 3h8v8H3z" stroke="#bbb" />
            <path d="M5.500 5.500h8v7h-8z" fill="#444" stroke="#ccc" />
            <path d="M7 9l2 2 3-4" stroke="#ddd" />
          </Svg>
          <Cell className="h-[14px] w-[15px] border border-[#111] bg-[#2e2e2e]">
            <Svg w={13} h={12}>
              <circle cx="5" cy="5" r="4" stroke="#ccc" strokeWidth="1.300" />
              <path d="M5.500 5.500h7v6h-7z" fill="#777" stroke="#ccc" />
            </Svg>
          </Cell>
          <Svg w={12} h={12}>
            <path d="M4 1H3v4L1 6l2 1v4h1M8 1h1v4l2 1-2 1v4H8" stroke="#ccc" strokeWidth="1.800" />
          </Svg>
        </div>
        <button className="h-[14px] w-[162px] border border-[#191919] bg-linear-to-b from-[#525252] to-[#3a3a3a] leading-[12px] text-[#d0d0d0]">
          スイッチ / モード
        </button>
        <Svg w={9} h={5} className="ml-[141px]">
          <path d="M0 5l3-4 2 2 1-1 3 3z" fill="#999" stroke="#ddd" strokeWidth=".6" />
        </Svg>
        <Svg w={46} h={12} className="mx-[12px]">
          <path d="M4.500 5.500h41v2h-41z" fill="#333" stroke="#111" />
          <path d="M.5 11V5L4 1.500 7.500 5v6z" fill="#666" stroke="#111" />
        </Svg>
        <Svg w={17} h={8} className="mr-[5px]">
          <path d="M0 8l6-7 2 2 2-3 7 8z" fill="#aaa" stroke="#ddd" strokeWidth=".6" />
        </Svg>
        <div className="mr-[17px] flex flex-1 items-center justify-between self-stretch border-x border-[#1a1a1a] bg-[#373737] px-[5px]">
          <Svg w={6} h={10}>
            <path d="M6 0v10L0 5z" fill="#777" />
          </Svg>
          <Svg w={6} h={10}>
            <path d="M0 0v10l6-5z" fill="#777" />
          </Svg>
        </div>
      </div>
    </div>
  </section>
);

const alignIcons = [
  "M1.500 0v14M4 2h6v4H4zM4 9h11v4H4z",
  "M8 0v14M5 2h6v4H5zM2 9h12v4H2z",
  "M15.500 0v14M7 2h6v4H7zM2 9h11v4H2z",
  "M0 1.500h17M3 4h4v9H3zM10 4h4v5h-4z",
  "M0 7h17M3 2.500h4v9H3zM10 5h4v4h-4z",
  "M0 13.500h17M3 2h4v9H3zM10 6h4v5h-4z",
];

const spreadIcons = [
  "M1 1.500h15M5 3h6v3H5zM1 8.500h15M4 10h9v3H4z",
  "M1 3.500h15M5 2h6v3H5zM1 10.500h15M4 9h9v3H4z",
  "M1 6.500h15M5 2h6v3H5zM1 13.500h15M4 9h9v3H4z",
  "M2.500 0v14M4 3h4v8H4zM10.500 0v14M12 4h3v5h-3z",
  "M4.500 0v14M3 3h4v8H3zM12.500 0v14M11 4h3v5h-3z",
  "M8.500 0v14M3 3h4v8H3zM15.500 0v14M11 4h3v5h-3z",
];

const AlignPanel = () => (
  <section className="ml-[4px] w-[206px] shrink-0 border-b border-[#555] bg-[#424242] text-[11px] leading-[16px] text-[#d0d0d0]">
    <div className={strip}>
      <button className={clsx(activeTab, "w-[49px]")}>
        <Grip />
        整列
        <Close />
      </button>
      <button className={clsx(idleTab, "w-[62px]")}>ペイント</button>
      <button className={clsx(idleTab, "w-[50px]")}>段落</button>
      <PanelEnd />
    </div>
    <div className="flex items-center justify-between pt-[4px] pr-[4px] pl-[8px]">
      <span>レイヤーを整列 :</span>
      <Pick name="レイヤーを整列" value="コンポジション" className="w-[109px]" />
    </div>
    <div className="ml-[6px] flex h-[30px] items-center justify-between border-b border-[#222] pr-[8px] pl-[6px]">
      {alignIcons.map((d) => (
        <Svg key={d} w={17} h={15}>
          <path d={d} stroke="#ddd" fill="#888" />
        </Svg>
      ))}
    </div>
    <p className="pt-px pl-[8px]">レイヤーを配置 :</p>
    <div className="ml-[6px] flex h-[24px] items-center justify-between pr-[8px] pl-[6px]">
      {spreadIcons.map((d) => (
        <Svg key={d} w={17} h={15}>
          <path d={d} stroke="#777" fill="#666" />
        </Svg>
      ))}
    </div>
  </section>
);

/* ---------- taskbar ---------- */

const apps = [
  {
    name: "エクスプローラー",
    run: true,
    icon: (
      <>
        <path d="M2 3h8l2 2h9v6H2z" fill="#e8b93e" />
        <path d="M2 7h20v15H2z" fill="#fbe08a" />
        <path d="M5 22v-8h14v8h-4v-4H9v4z" fill="#4aa8d8" />
      </>
    ),
  },
  {
    name: "メディアプレーヤー",
    icon: (
      <>
        <path d="M6 3l15 2v17L6 21z" fill="#8fb8d8" />
        <path d="M3 4h15v16H3z" fill="#c9dceb" />
        <path d="M4 6h13v12H4z" fill="#ea8522" />
        <circle cx="10.500" cy="12" r="5" fill="#fff" />
        <path d="M9 9v6l4.500-3z" fill="#ea8522" />
      </>
    ),
  },
  {
    name: "iTunes",
    icon: (
      <>
        <circle cx="12" cy="12" r="10" fill="#f6f1f8" />
        <circle cx="12" cy="12" r="9.300" stroke="#d9a5cf" strokeWidth="1" />
        <path d="M9.500 16V7.500l6-1.500v9" stroke="#d8439c" strokeWidth="1.600" />
        <circle cx="8.300" cy="16" r="1.900" fill="#8c5be0" />
        <circle cx="14.300" cy="15" r="1.900" fill="#e0457f" />
      </>
    ),
  },
  {
    name: "Edge",
    icon: (
      <path
        d="M2 11C3 5 7 2 12 2c6 0 9.500 4 9.500 9v2.500H8.500c.3 5 7.500 5.500 12 3V21C13 24.500 4.500 22 4.500 14c0-4 2.500-6.500 5-7.500-1 1-1.500 2.500-1.500 3.500h8.500c0-6-9.500-6.500-14.500 1z"
        fill="#2a80d4"
      />
    ),
  },
  {
    name: "Firefox",
    icon: (
      <>
        <circle cx="12.500" cy="11" r="9" fill="#2e62b8" />
        <path
          d="M3 5c-2 6-2 11 2 14.500C10 24 19 23 21.500 16c1.500-4 .5-8-1-10.500 0 4-1 6-3 8-2.500 2.500-7 2-8-.500 2 .5 3-.5 4-1.500-2 0-4-.5-4-2.500 0-1 .7-1.500 2-1.500C10.500 5 8 5 6.500 6 5 6 4 6 3 5z"
          fill="#e8731c"
        />
        <path d="M18 3c3 3 4 8 1.500 12.500 1-4 .5-8-1.500-12.500z" fill="#fbc63a" />
      </>
    ),
  },
  {
    name: "Chrome",
    run: true,
    icon: (
      <>
        <circle cx="12" cy="12" r="10" fill="#f7c92b" />
        <path d="M3.300 7A10 10 0 0120.700 7H12a5 5 0 00-4.500 7z" fill="#dd4b3e" />
        <path d="M3.300 7l4.500 7.500A5 5 0 0012 17l-2 5A10 10 0 013.300 7z" fill="#3ea854" />
        <circle cx="12" cy="12" r="4.600" fill="#fff" />
        <circle cx="12" cy="12" r="3.700" fill="#4a8af4" />
      </>
    ),
  },
  {
    name: "アラーム",
    run: true,
    icon: (
      <>
        <circle cx="12" cy="13" r="8.500" stroke="#fff" strokeWidth="1.800" />
        <path d="M2 7c0-3 2-5 5-5M22 7c0-3-2-5-5-5M5 20l-2 2M19 20l2 2" stroke="#fff" strokeWidth="2" />
        <path d="M8 12l4 3 5-5" stroke="#fff" strokeWidth="1.500" />
      </>
    ),
  },
  { name: "After Effects", run: true, active: true },
  {
    name: "ペイント",
    run: true,
    icon: (
      <>
        <path d="M2 14C2 8 8 5 14 6s8 5 6 8-5 1-5 3 1 3-2 4C7 22 2 19 2 14z" fill="#cfe0ea" />
        <circle cx="6" cy="13" r="1.800" fill="#d04a3a" />
        <circle cx="9.500" cy="9.500" r="1.800" fill="#3b9a4c" />
        <circle cx="8" cy="17.500" r="1.800" fill="#3a64c8" />
        <circle cx="14" cy="9.500" r="1.600" fill="#e5b62c" />
        <path d="M11 17l8-11" stroke="#c98a3c" strokeWidth="2" />
        <path d="M18 7l2-5 3 1-3 5z" fill="#e7c48a" />
      </>
    ),
  },
];

const Taskbar = () => (
  <footer className="flex h-[39px] items-stretch bg-linear-to-r from-[#020807] via-[#021713] via-35% to-[#020608] to-65% text-white">
    <button aria-label="スタート" className="flex w-[44px] items-center justify-center">
      <Svg w={20} h={20}>
        <path d="M0 3l8.500-1.200v7.700H0zM9.500 1.600L20 0v9.500H9.500zM0 10.500h8.500v7.700L0 17zM9.500 10.500H20V20L9.500 18.400z" fill="#fff" />
      </Svg>
    </button>
    <button aria-label="検索" className="flex w-[46px] items-center justify-center">
      <Svg w={20} h={20}>
        <circle cx="12.500" cy="7.500" r="6.500" stroke="#fff" strokeWidth="1.500" />
        <path d="M8 12l-7 7" stroke="#fff" strokeWidth="1.800" />
      </Svg>
    </button>
    <button aria-label="タスクビュー" className="mr-[3px] flex w-[45px] items-center justify-center">
      <Svg w={24} h={20}>
        <path d="M4.500 1.500h15v17h-15zM3 3.500H.7v13H3M21 3.500h2.300v13H21" stroke="#fff" strokeWidth="1.300" />
      </Svg>
    </button>
    {apps.map((a) => (
      <button
        key={a.name}
        aria-label={a.name}
        className={clsx("relative flex w-[46px] items-center justify-center", a.active && "bg-[#3a4a48]")}>
        {a.icon ? <Svg w={24} h={24} className="h-[22px] w-[22px]">{a.icon}</Svg> : <AeLogo />}
        {a.run && (
          <span className={clsx("absolute bottom-0 h-[3px] bg-[#7eb6ee]", a.active ? "inset-x-0" : "inset-x-[5px]")} />
        )}
      </button>
    ))}
    <div className="mr-[5px] ml-auto flex items-center border-r border-[#444] text-[15px] leading-[20px]">
      <Cell className="w-[30px]">
        <Svg w={16} h={10}>
          <path d="M1 9l7-7 7 7" stroke="#fff" strokeWidth="1.400" />
        </Svg>
      </Cell>
      <Cell className="w-[30px]">
        <Svg w={20} h={14}>
          <path d="M6.500 4.500h10.500v7.500H6.500z" fill="#fff" />
          <path d="M4.500 7v6.500H18v-10H6.500M19 6.500v4M1 0v3M4 0v3M0 3.500h5v2H0zM2.500 5v4.500h2" stroke="#fff" strokeWidth="1.200" />
        </Svg>
      </Cell>
      <Cell className="w-[31px]">
        <Svg w={20} h={18}>
          <path d="M4 13C-1 13 0 7 3 7c0-5 5-7 8-5 4 0 5 4 5 6v5z" fill="#eee" />
          <path d="M6 14C4 10 6 7 9 7" stroke="#333" />
          <circle cx="14" cy="12.500" r="5.300" fill="#999" />
          <path d="M12.500 10v5M15.500 10v5" stroke="#fff" strokeWidth="1.500" />
        </Svg>
      </Cell>
      <Cell className="w-[30px]">
        <Svg w={17} h={17}>
          <path d="M1 16C1 7 8 1 16 1M5 16C5 10 10 5 16 5M9 16c0-4 3-7 7-7" stroke="#ccc" strokeWidth="1.300" />
          <circle cx="14" cy="14.500" r="2" fill="#fff" />
        </Svg>
      </Cell>
      <Cell className="w-[29px]">
        <Svg w={20} h={16}>
          <path d="M1 5.500h3L8 2v12l-4-3.500H1z" stroke="#fff" strokeWidth="1.300" />
          <path d="M11 5.500c1.500 1.500 1.500 3.500 0 5M14 3.500c3 3 3 6 0 9" stroke="#ccc" />
          <path d="M16.500 1.500c4 4 4 9 0 13" stroke="#666" />
        </Svg>
      </Cell>
      <Cell className="w-[31px] text-[22px] font-light">A</Cell>
      <Cell className="w-[42px]">
        <span className="flex h-[18px] w-[18px] items-center justify-center bg-white">
          <span className="flex h-[16px] w-[16px] items-center justify-center rounded-full bg-[#1c1c1c] text-[11px] font-bold text-white">
            J
          </span>
        </span>
      </Cell>
      <span className="w-[54px] text-center text-[14px]">9:40</span>
      <Cell className="w-[49px]">
        <Svg w={20} h={20}>
          <path d="M0 0h20v16h-7l-3 4-2-4H0z" fill="#fff" />
          <path d="M4 4.500h12M4 8h12M4 11.500h8" stroke="#111" strokeWidth="1.300" />
        </Svg>
      </Cell>
      <span className="w-[11px]" />
    </div>
  </footer>
);

export default function App() {
  return (
    <div className="flex min-h-screen flex-col bg-[#161616] [font-family:Open_Sans,Noto_Sans_CJK_JP,sans-serif] [font-feature-settings:'palt']">
      <Header />
      <Toolbar />
      <main className="flex flex-1 flex-col">
        <div className="flex">
          <ProjectPanel />
          <div className="ml-[4px] flex min-w-0 flex-1">
            <CompPanel />
          </div>
          <aside className="mr-px ml-[4px] flex w-[206px] shrink-0 flex-col text-[11px] leading-[16px]">
            <InfoPanel />
            <PreviewPanel />
            <div className="mt-[4px] mr-[4px] h-[6px] border border-[#111] bg-[#4a4a4a]" />
            <CharacterPanel />
          </aside>
        </div>
        <div className="mt-[5px] mr-px flex flex-1">
          <Timeline />
          <AlignPanel />
        </div>
      </main>
      <Taskbar />
    </div>
  );
}
